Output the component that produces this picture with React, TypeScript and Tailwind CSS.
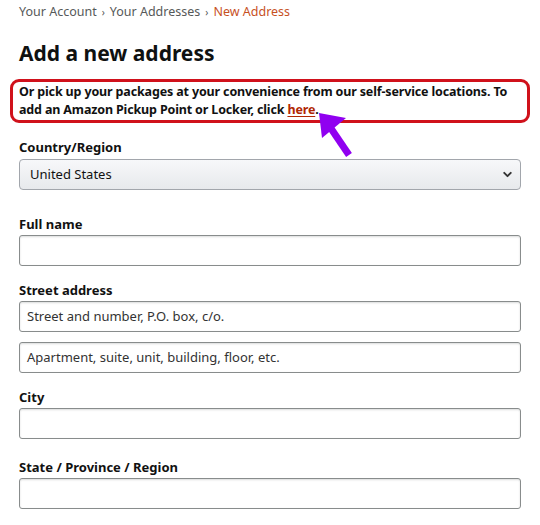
import { ChevronDown } from "lucide-react"

const font = { fontFamily: '"Noto Sans", "Open Sans", Arial, sans-serif' }

function Field({ label, placeholder }: { label?: string; placeholder?: string }) {
  return (
    <div>
      {label && <div className="text-[13px] font-bold text-[#111] leading-[16px] mb-[3px]">{label}</div>}
      <div className="h-[31px] rounded-[3px] border border-[#888c8c] bg-white shadow-[inset_0_1px_2px_rgba(15,17,17,0.15)] flex items-center px-[7px] text-[13px] text-[#333]">
        {placeholder}
      </div>
    </div>
  )
}

export default function App() {
  return (
    <div className="relative w-[540px] h-[525px] bg-white overflow-hidden text-[#0f1111]" style={font}>
      <div className="px-[19px] pt-[3px]">
        <div className="flex items-center gap-[5px] text-[12.5px] text-[#565959] leading-[18px]">
          <span>Your Account</span>
          <span className="text-[10px]">›</span>
          <span>Your Addresses</span>
          <span className="text-[10px]">›</span>
          <span className="text-[#c7511f]">New Address</span>
        </div>

        <h1 className="mt-[18px] text-[21px] font-bold leading-[28px] text-[#0f1111]">Add a new address</h1>

        <div className="mt-[12px] -mx-[9px] rounded-[9px] border-[3px] border-[#d0111b] px-[6px] py-[1px] text-[12.5px] font-bold leading-[18px] tracking-[-0.15px] text-[#111]">
          Or pick up your packages at your convenience from our self-service locations. To add an Amazon Pickup Point or Locker, click{" "}
          <span className="text-[#b12704] underline underline-offset-2">here</span>.
        </div>

        <div className="mt-[16px]">
          <div className="text-[13px] font-bold text-[#111] leading-[16px] mb-[4px]">Country/Region</div>
          <div className="h-[31px] rounded-[4px] border border-[#a2a6ac] bg-gradient-to-b from-[#f7f8fa] to-[#e7e9ec] flex items-center justify-between pl-[10px] pr-[6px] text-[13px] text-[#111]">
            <span>United States</span>
            <ChevronDown size={13} strokeWidth={3.5} className="text-[#333]" />
          </div>
        </div>

        <div className="mt-[26px] flex flex-col">
          <Field label="Full name" />
          <div className="mt-[16px]">
            <Field label="Street address" placeholder="Street and number, P.O. box, c/o." />
          </div>
          <div className="mt-[10px]">
            <Field placeholder="Apartment, suite, unit, building, floor, etc." />
          </div>
          <div className="mt-[16px]">
            <Field label="City" />
          </div>
          <div className="mt-[20px]">
            <Field label="State / Province / Region" />
          </div>
        </div>
      </div>

      <svg className="absolute left-0 top-0 pointer-events-none" width="540" height="525">
        <line x1="349" y1="155" x2="330" y2="127" stroke="#9000f0" strokeWidth="7" strokeLinecap="butt" />
        <polygon points="319,113 346,118 322,138" fill="#9000f0" />
      </svg>
    </div>
  )
}
